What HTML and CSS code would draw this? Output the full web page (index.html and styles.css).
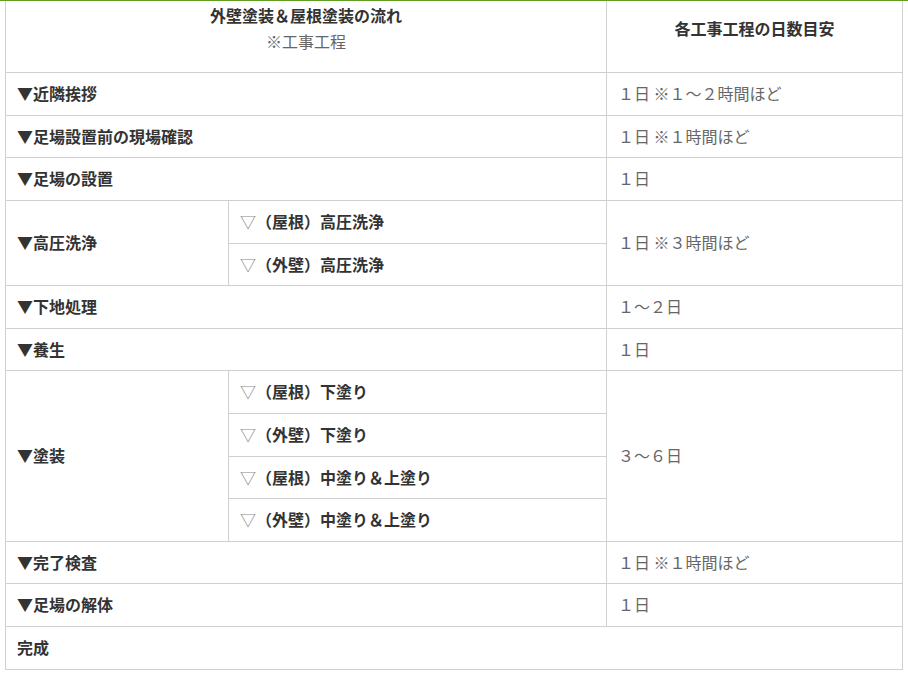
FILE: index.html
```html
<!DOCTYPE html>
<html lang="ja">
<head>
<meta charset="utf-8">
<title>外壁塗装＆屋根塗装の流れ</title>
<link rel="stylesheet" href="styles.css">
</head>
<body>
<div class="topline"></div>
<table class="flow">
  <colgroup>
    <col class="c1"><col class="c2"><col class="c3">
  </colgroup>
  <thead>
    <tr>
      <th colspan="2" class="h-left"><span class="h-title">外壁塗装＆屋根塗装の流れ</span><br><span class="h-note">※工事工程</span></th>
      <th class="h-right">各工事工程の日数目安</th>
    </tr>
  </thead>
  <tbody>
    <tr><td colspan="2" class="step">▼近隣挨拶</td><td class="days">１日 ※１～２時間ほど</td></tr>
    <tr><td colspan="2" class="step">▼足場設置前の現場確認</td><td class="days">１日 ※１時間ほど</td></tr>
    <tr><td colspan="2" class="step">▼足場の設置</td><td class="days">１日</td></tr>
    <tr><td rowspan="2" class="step">▼高圧洗浄</td><td class="sub"><span class="tri">▽</span>（屋根）高圧洗浄</td><td rowspan="2" class="days">１日 ※３時間ほど</td></tr>
    <tr><td class="sub"><span class="tri">▽</span>（外壁）高圧洗浄</td></tr>
    <tr><td colspan="2" class="step">▼下地処理</td><td class="days">１～２日</td></tr>
    <tr><td colspan="2" class="step">▼養生</td><td class="days">１日</td></tr>
    <tr><td rowspan="4" class="step">▼塗装</td><td class="sub"><span class="tri">▽</span>（屋根）下塗り</td><td rowspan="4" class="days">３～６日</td></tr>
    <tr><td class="sub"><span class="tri">▽</span>（外壁）下塗り</td></tr>
    <tr><td class="sub"><span class="tri">▽</span>（屋根）中塗り＆上塗り</td></tr>
    <tr><td class="sub"><span class="tri">▽</span>（外壁）中塗り＆上塗り</td></tr>
    <tr><td colspan="2" class="step">▼完了検査</td><td class="days">１日 ※１時間ほど</td></tr>
    <tr><td colspan="2" class="step">▼足場の解体</td><td class="days">１日</td></tr>
    <tr><td colspan="3" class="step">完成</td></tr>
  </tbody>
</table>
</body>
</html>
```

FILE: styles.css
```css
html, body {
  margin: 0;
  padding: 0;
  background: #fff;
}
body {
  font-family: "Noto Sans CJK JP", "Noto Sans", sans-serif;
  font-size: 16px;
  line-height: 25.6px;
  color: #333;
}
.topline {
  height: 1px;
  background: #5f9e21;
}
.flow {
  margin-left: 5px;
  width: 897px;
  border-collapse: collapse;
  table-layout: fixed;
}
.c1 { width: 223px; }
.c2 { width: 378px; }
.c3 { width: 296px; }
.flow th,
.flow td {
  border: 1px solid #d0d0d0;
  padding: 8px 11px;
  text-align: left;
  vertical-align: middle;
}
.flow thead th {
  border-top: none;
  text-align: center;
  vertical-align: top;
  font-weight: 700;
}
.flow thead .h-left {
  padding-top: 2px;
  padding-bottom: 18px;
}
.h-note {
  font-weight: 400;
  color: #666;
}
.flow thead .h-right {
  padding-top: 15px;
}
.step {
  font-weight: 700;
  color: #333;
}
.sub {
  font-weight: 700;
  color: #333;
}
.tri {
  font-weight: 400;
  color: #888;
}
.days {
  color: #666;
}
```
